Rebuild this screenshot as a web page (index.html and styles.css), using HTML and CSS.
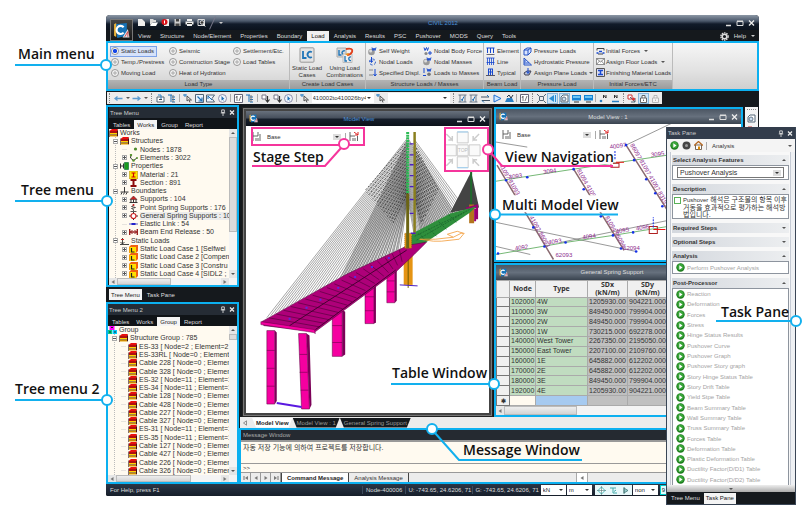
FILE: index.html
```html
<!DOCTYPE html>
<html lang="en">
<head>
<meta charset="utf-8">
<title>CIVIL 2012</title>
<link rel="stylesheet" href="styles.css">
</head>
<body>
<svg class="defs" aria-hidden="true">
  <symbol id="logo" viewBox="0 0 16 16"><path d="M2 2l11-1v12l-9 2z" fill="#1673b8"/><path d="M1 2l2-1v13l-2-1z" fill="#e9b23a"/><path d="M10 5A3.800 3.800 0 1 0 10 10" fill="none" stroke="#fff" stroke-width="2"/><path d="M9 14.500l5-8 1.500 8z" fill="#d9e4ec"/><path d="M11 14l3-5v5" fill="none" stroke="#d33" stroke-width=".8"/></symbol>
  <symbol id="q-new" viewBox="0 0 9 9"><path d="M1 1h4l3 3v4H1z" fill="#eee"/></symbol>
  <symbol id="q-open" viewBox="0 0 9 9"><path d="M1 1h3l1 1h2v2H4L1 7z" fill="#ddd"/><path d="M3 4.500h6L7 8H1z" fill="#fff"/></symbol>
  <symbol id="q-rec" viewBox="0 0 9 9"><path d="M3 1h5v7H3z" fill="#eee"/><circle cx="3.500" cy="4" r="3" fill="#d8121b"/><path d="M3.500 2.500v3" stroke="#fff"/></symbol>
  <symbol id="q-save" viewBox="0 0 9 9"><path d="M1.500 1h6v7h-6z" fill="#ccc"/><path d="M3 1h3v2.500H3zM2.500 5.500h4V8h-4z" fill="#444"/></symbol>
  <symbol id="q-print" viewBox="0 0 9 9"><path d="M2 1h5v2H2zM.500 3.500h8v3h-8zM2 6.500h5V8H2z" fill="#eee"/><path d="M2 5.500h5" stroke="#333"/></symbol>
  <symbol id="q-view" viewBox="0 0 9 9"><path d="M1 1.500h6.500v6H1z" fill="none" stroke="#ddd"/><circle cx="5" cy="4.500" r="1.800" fill="#333" stroke="#fff" stroke-width=".8"/><path d="M6.200 6l2 2.500" stroke="#fff"/></symbol>
  <symbol id="win" viewBox="0 0 30 8"><path d="M1 6.500h5" stroke="#ddd" stroke-width="1.500"/><path d="M12 2.500h6v4h-6zM12 2h6" stroke="#ddd" fill="none"/><path d="M24 1.500l5 5M29 1.500l-5 5" stroke="#eee" stroke-width="1.300"/></symbol>
  <symbol id="gear" viewBox="0 0 9 9"><circle cx="4.500" cy="4.500" r="3.600" fill="none" stroke="#ddd" stroke-width="1.400" stroke-dasharray="1.500 .8"/><circle cx="4.500" cy="4.500" r="2.300" fill="none" stroke="#ddd" stroke-width="1.500"/></symbol>
  <symbol id="lc" viewBox="0 0 16 16"><rect x="1" y=".800" width="14" height="14.400" rx="1" fill="#e4e4e4" stroke="#999"/><path d="M4 4v7h3.500M12.800 5.200a2.700 2.900 0 1 0 0 4.800" fill="none" stroke="#1e74b8" stroke-width="1.800"/></symbol>
  <symbol id="lcc" viewBox="0 0 18 16"><path d="M1 1h9v9H1z" fill="#ddd" stroke="#aaa"/><path d="M3 3v5h2.500M9 4a2 2 0 1 0 0 3.500" fill="none" stroke="#1e74b8" stroke-width="1.400"/><path d="M7 7h9v8.500H7z" fill="#eee" stroke="#bbb"/><path d="M9 9v5h2M15 10a1.800 1.800 0 1 0 0 3.500" fill="none" stroke="#1e74b8" stroke-width="1.300"/><path d="M10 2c5-1 7 0 6 3-1 2-3 3-5 3" fill="none" stroke="#e0401c" stroke-width="1.800"/><path d="M13 6l-4 1 3 2z" fill="#f09018"/></symbol>
  <symbol id="r-self" viewBox="0 0 9 9"><circle cx="3.500" cy="5" r="3.300" fill="#999"/><circle cx="2.600" cy="4" r="1.500" fill="#ddd"/><path d="M4 .5l1 3 1-2.500 1 2.500 1-3" fill="none" stroke="#1748d0"/></symbol>
  <symbol id="r-node" viewBox="0 0 9 9"><circle cx="4.500" cy="5" r="3" fill="none" stroke="#3b65c8" stroke-dasharray="3 1.500"/><path d="M3.500 0v5M2 3.500L3.500 5.500 5 3.500" fill="none" stroke="#1748d0"/></symbol>
  <symbol id="r-spec" viewBox="0 0 9 9"><path d="M1 2h4M1 7h4" stroke="#888"/><path d="M7 1v7M5.500 6L7 8l1.500-2" fill="none" stroke="#1748d0"/></symbol>
  <symbol id="r-mass" viewBox="0 0 9 9"><path d="M1 .5l1 3 1.500-3 1 3 1-3M5 6h4M7 4v4" fill="none" stroke="#1748d0"/><circle cx="3" cy="6.500" r="1.600" fill="#888"/></symbol>
  <symbol id="r-l2m" viewBox="0 0 9 9"><path d="M1 0v5M0 7.500h3M4 .5l1 3 1-2.500 1 2.500 1-3" fill="none" stroke="#1748d0"/><circle cx="6" cy="6.300" r="1.800" fill="#777"/></symbol>
  <symbol id="r-beam" viewBox="0 0 9 9"><path d="M.5 1h8M1.500 1v5M4.500 1v5M7.500 1v5" stroke="#1748d0" fill="none"/><path d="M.5 7.500h8" stroke="#667"/></symbol>
  <symbol id="r-line" viewBox="0 0 9 9"><path d="M.5 1h8M1.500 1v7M3.500 1v7M5.500 1v7M7.500 1v7M.5 5.500h8" stroke="#1748d0" fill="none" stroke-width=".8"/></symbol>
  <symbol id="r-typ" viewBox="0 0 9 9"><path d="M2 1h5M2.500 1v6M4.500 1v6M6.500 1v6M2 4h5" stroke="#1748d0" fill="none"/><path d="M0 7.500h9" stroke="#556"/></symbol>
  <symbol id="r-pres" viewBox="0 0 9 9"><path d="M1 3l3-2h4v4L5 8H1zM1 3h4v5M5 3l3-2" fill="#dce6ff" stroke="#2452c4"/></symbol>
  <symbol id="r-hyd" viewBox="0 0 9 9"><path d="M1 1v7h7.500zM1 4h2M1 6h5" fill="#dce6ff" stroke="#2452c4"/></symbol>
  <symbol id="r-plane" viewBox="0 0 9 9"><path d="M1 5l3-2h4L6 7H2z" fill="#b8c4dc" stroke="#445"/><path d="M5 0v5M3.500 3.500L5 5.500l1.500-2" fill="none" stroke="#1748d0"/></symbol>
  <symbol id="r-init" viewBox="0 0 9 9"><path d="M1 1.500h7M2 7h5M1 1.500v2M8 1.500v2" stroke="#444" fill="none"/><path d="M.5 6h2M6.500 6h2M3 4.500h3" stroke="#1748d0" stroke-width="1.400"/></symbol>
  <symbol id="r-floor" viewBox="0 0 9 9"><path d="M.5 1.500h8v6h-8zM.5 1.500l4 3.500 4-3.500M.5 7.500l3-3.500M8.500 7.500l-3-3.500" fill="#fff" stroke="#666" stroke-width=".7"/></symbol>
  <symbol id="r-fin" viewBox="0 0 9 9"><path d="M.5.5h8v8h-8z" fill="#dde" stroke="#555"/><path d="M2 2.500h5M4.500 2.500v4M2 6.500h5" stroke="#1748d0" stroke-width="1.500"/></symbol>
  <symbol id="t-back" viewBox="0 0 9 9"><path d="M8.500 4.500H1M3.500 2.500L1 4.500l2.500 2" fill="none" stroke="#5b9bd0" stroke-width="1.300"/></symbol>
  <symbol id="t-fwd" viewBox="0 0 9 9"><path d="M.5 4.500H8M5.500 2.500L8 4.500 5.500 6.500" fill="none" stroke="#5b9bd0" stroke-width="1.300"/></symbol>
  <symbol id="t-box" viewBox="0 0 9 9"><path d="M1 3h7v5H1z" fill="#fff" stroke="#567"/><path d="M2 1h3v4" stroke="#2a7fc4" fill="none"/><path d="M3 5.500h3" stroke="#345"/></symbol>
  <symbol id="t-tree" viewBox="0 0 9 9"><path d="M1 1h4M5 3h3M5 5.500h3M5 8h3M4 1v7" stroke="#1f6fb4" fill="none"/><path d="M6 1v7" stroke="#777"/></symbol>
  <symbol id="t-pick" viewBox="0 0 9 9"><path d="M0 1h4M2 0v3" stroke="#2a7fc4"/><path d="M4 2l4.500 4H6l1 2.500" fill="none" stroke="#555"/><path d="M4 2v5l2-1.500" fill="none" stroke="#555"/></symbol>
  <symbol id="t-win" viewBox="0 0 9 9"><path d="M.5.5h8v8h-8z" fill="#e8f3ff" stroke="#567"/><path d="M2.500 2.500L7 7V3.500M7 7H3.500" fill="none" stroke="#1f6fb4" stroke-width="1.200"/></symbol>
  <symbol id="t-poly" viewBox="0 0 9 9"><path d="M.5 1h8L6 4.500 8.500 8h-8z" fill="#e8f3ff" stroke="#567"/><path d="M2 2l4 4M2 2v3" stroke="#1f6fb4"/></symbol>
  <symbol id="t-circ" viewBox="0 0 9 9"><circle cx="4.500" cy="4.500" r="4" fill="#eef4fb" stroke="#779" stroke-width=".8"/><path d="M3.500 2l3 3-1.500.2.800 2-1.300-1.500-1 .8z" fill="#1f6fb4"/></symbol>
  <symbol id="t-half" viewBox="0 0 9 9"><path d="M.5.5h8v8h-8z" fill="#fff" stroke="#667"/><path d="M3 2v5M5 7l2-5M2 4l1-2" fill="none" stroke="#555" stroke-width=".8"/></symbol>
  <symbol id="t-down" viewBox="0 0 9 9"><path d="M1 1h4v4H1z" fill="#fff" stroke="#778"/><path d="M6.500 2v5M4.500 5.500l2 2.500 2-2.500" fill="none" stroke="#333" stroke-width="1.200"/></symbol>
  <symbol id="t-dim" viewBox="0 0 9 9"><path d="M.5 1h8M.5 8h8M2 1v7M7 1v7" stroke="#567" fill="none" stroke-width=".8"/><path d="M4 6.500l2-4M3.500 5l1 2" stroke="#1f6fb4"/></symbol>
  <symbol id="t-eq" viewBox="0 0 9 9"><path d="M0 3h8M1 6.500h8" stroke="#456" stroke-width="1.200"/><path d="M6 1l2 2M3 8.500l-2-2" stroke="#1f6fb4"/></symbol>
  <symbol id="t-tri" viewBox="0 0 9 9"><path d="M1 1l7 3.500L1 8z" fill="#cfe7ff" stroke="#1f6fd4"/></symbol>
  <symbol id="t-base" viewBox="0 0 9 9"><path d="M0 8l2-4h5l2 4z" fill="#2a7fc4"/><path d="M2 3l2-2 2 3 2-3" fill="none" stroke="#234"/></symbol>
  <symbol id="t-fit" viewBox="0 0 9 9"><path d="M2.500 2.500h4v4h-4zM0 0l2 2M9 0L7 2M0 9l2-2M9 9L7 7" fill="none" stroke="#567"/></symbol>
  <symbol id="t-cone" viewBox="0 0 9 9"><path d="M1 4.500L6 1v7z" fill="#2a8fd4"/><path d="M7.500 1v7" stroke="#2a8fd4"/></symbol>
  <symbol id="t-page" viewBox="0 0 9 9"><path d="M1 3l2-2h5v7H1z" fill="#fff" stroke="#567"/><circle cx="4" cy="5" r="2" fill="#cde" stroke="#678"/></symbol>
  <symbol id="t-mon" viewBox="0 0 9 9"><path d="M0 1h9v5.500H0z" fill="#1684d4"/><path d="M1 2h7v2H1z" fill="#6cc4f4"/><path d="M2 8h5" stroke="#333"/></symbol>
  <symbol id="t-n" viewBox="0 0 9 9"><path d="M4.500 4V1l2.500 3V1" fill="none" stroke="#333"/><circle cx="2" cy="7" r="1.300" fill="#2a7fc4"/></symbol>
  <symbol id="t-n2" viewBox="0 0 9 9"><path d="M3.500 4V1l2.500 3V1" fill="none" stroke="#333"/><path d="M1 7.500h7" stroke="#2a7fc4" stroke-width="1.600"/></symbol>
  <symbol id="t-red" viewBox="0 0 9 9"><path d="M1 1h4v4H1z" fill="#fff" stroke="#c33"/><path d="M3 3l5 5M8 4v4H4" fill="none" stroke="#567"/><circle cx="6.500" cy="5" r="1.500" fill="#d33"/></symbol>
  <symbol id="t-lock" viewBox="0 0 9 9"><path d="M1.500 4h6v4.500h-6zM3 4V1.500h3V4M4.500 5.500v1.500" fill="#fff" stroke="#666"/></symbol>
  <symbol id="s-dia" viewBox="0 0 9 9"><path d="M4.500 1L8 4.500 4.500 8 1 4.500z" fill="#fff" stroke="#4bb"/><path d="M4.500 0v9M0 4.500h9" stroke="#577" stroke-width=".6"/></symbol>
  <symbol id="s-hook" viewBox="0 0 9 9"><path d="M1 2h6M4 2v5h4M7 4L5 5.500" fill="none" stroke="#4aa"/></symbol>
  <symbol id="s-flag" viewBox="0 0 9 9"><path d="M3 1v7M3 2l4 2.500L3 7z" fill="#9cc" stroke="#477" stroke-width=".8"/></symbol>
  <symbol id="books" viewBox="0 0 9 8"><path d="M1 1.500L3 0h6L8 2H1z" fill="#e81010"/><path d="M1 2h7l1-1v1.500L8 4H1z" fill="#b01010"/><path d="M1 4h7v1.500H1z" fill="#ffd400"/><path d="M1 6h7v1.500H1z" fill="#e8a000"/><path d="M8 2l1-1v5.500L8 8z" fill="#411"/><path d="M.500 1.500v6.500M1 5.750h7" stroke="#311" stroke-width=".6"/></symbol>
  <symbol id="x-node" viewBox="0 0 9 8"><circle cx="6.500" cy="3" r="1.600" fill="#4f8a2c"/></symbol>
  <symbol id="x-elem" viewBox="0 0 9 8"><path d="M2 1l-.5 3 3 2.500L8 4" fill="none" stroke="#333"/><circle cx="2" cy="1" r="1.200" fill="#5a9630"/><circle cx="4.500" cy="6.500" r="1.300" fill="#5a9630"/><circle cx="8" cy="4" r="1" fill="#5a9630"/></symbol>
  <symbol id="x-prop" viewBox="0 0 9 8"><path d="M.5 1.500v5M3.500 1.500v5M.5 4h3" stroke="#333"/><path d="M4.500.5h4v7h-4z" fill="#1b9a1b" stroke="#063" stroke-width=".6"/></symbol>
  <symbol id="x-mat" viewBox="0 0 9 8"><path d="M.5 0h8v8h-8z" fill="#ffe600" stroke="#a80" stroke-width=".5"/><path d="M2.500 2h4M4.500 2v4M2.500 6h4" stroke="#d00000" stroke-width="1.200"/></symbol>
  <symbol id="x-sec" viewBox="0 0 9 8"><path d="M1.500 1h6M4.500 1v6M1.500 7h6" stroke="#8c0a0a" stroke-width="2"/></symbol>
  <symbol id="x-bound" viewBox="0 0 9 8"><path d="M4.500 0v5M.5 5h8M1 7.500l1-2M3.500 7.500l1-2M6 7.500l1-2" stroke="#222" stroke-width=".9"/></symbol>
  <symbol id="x-sup" viewBox="0 0 9 8"><path d="M1 4.500L4.500 1 8 4.500z" fill="#c22" stroke="#522" stroke-width=".6"/><path d="M2 4.500V7M7 4.500V7M4.500 4.500V7M.5 7.500h8" stroke="#333"/></symbol>
  <symbol id="x-spr" viewBox="0 0 9 8"><path d="M4.500 0v1.500l-2 1 4 1-4 1 2 1V7M1.500 7.500h6" fill="none" stroke="#333" stroke-width=".8"/><circle cx="4.500" cy="1" r="1" fill="#c22"/></symbol>
  <symbol id="x-gen" viewBox="0 0 9 8"><path d="M0 4h9M4.500 0v8" stroke="#333"/><circle cx="4.500" cy="4" r="2.500" fill="#fff" stroke="#c22" stroke-width="1.200"/></symbol>
  <symbol id="x-link" viewBox="0 0 9 8"><path d="M0 4h9" stroke="#55b"/><path d="M2.500 4h4" stroke="#22c" stroke-width="2"/></symbol>
  <symbol id="x-rel" viewBox="0 0 9 8"><path d="M.7 1v6M8.300 1v6M1 4h7" stroke="#922" stroke-width="1.400"/><path d="M3.500 2L1.500 4l2 2M5.500 2l2 2-2 2" fill="none" stroke="#922"/></symbol>
  <symbol id="x-sl" viewBox="0 0 9 8"><path d="M2.500 1v6M.5 5l2 2 2-2M0 7.500h9" fill="none" stroke="#333" stroke-width=".9"/><path d="M1 2.500h3" stroke="#c22"/></symbol>
  <symbol id="x-case" viewBox="0 0 9 8"><path d="M2 0h7v6L7 8H0V2z" fill="#f06010"/><path d="M.5 2h6.500v6H.5z" fill="#ffe000"/><path d="M2.500 3v4h3" fill="none" stroke="#222" stroke-width="1.200"/></symbol>
  <symbol id="x-grp" viewBox="0 0 9 8"><path d="M1.500 0h5v4h-5z" fill="#f0f"/><path d="M0 4h4v4H0z" fill="#0c8"/><path d="M4.500 4h4.500v4H4.500z" fill="#0cf"/><path d="M3 1.500h2M1 6h2M6 6h2" stroke="#222"/></symbol>
  <symbol id="go" viewBox="0 0 9 9"><circle cx="4.500" cy="4.500" r="4.200" fill="#1c7c1c"/><circle cx="4.500" cy="4" r="3.200" fill="#39a539"/><path d="M3.300 2.300l3.200 2.200-3.200 2.200z" fill="#fff"/></symbol>
  <symbol id="pin" viewBox="0 0 6 8"><path d="M1.500 1h3v3h-3zM.5 4.500h5M3 4.500V8" fill="none" stroke="#ddd"/></symbol>
  <symbol id="x" viewBox="0 0 6 6"><path d="M1 1l4 4M5 1L1 5" stroke="#eee" stroke-width="1.200"/></symbol>
  <symbol id="stage" viewBox="0 0 10 10"><path d="M1 0v9M1 4h5M6 0v4M4 6v3M6 6v3M8 2v7" fill="none" stroke="#555" stroke-width=".9"/></symbol>
  <symbol id="stage2" viewBox="0 0 10 10"><path d="M1 0v9M1 4h5M4 6v3M6 6v3M8.500 4v5" fill="none" stroke="#555" stroke-width=".9"/><path d="M5 0l4 3M9 0v3H6" fill="none" stroke="#d22"/></symbol>
  <symbol id="left" viewBox="0 0 6 6"><path d="M4.500 1v4L1.500 3z" fill="#777"/></symbol>
  <symbol id="right" viewBox="0 0 6 6"><path d="M1.500 1v4l3-2z" fill="#777"/></symbol>
  <symbol id="first" viewBox="0 0 6 6"><path d="M5 1v4L2 3zM.500 1h1v4h-1z" fill="#777"/></symbol>
  <symbol id="last" viewBox="0 0 6 6"><path d="M1 1v4l3-2zM4.500 1h1v4h-1z" fill="#777"/></symbol>
  <symbol id="open" viewBox="0 0 6 6"><path d="M4.500.8v4.400L1.500 3z" fill="none" stroke="#777" stroke-width=".8"/></symbol>
</svg>

<div class="page">
<div class="app">
  <header class="titlebar">
    <button class="logo" aria-label="Application menu"><svg><use href="#logo"/></svg></button>
    <div class="quick">
      <svg><use href="#q-new"/></svg><svg><use href="#q-open"/></svg><svg><use href="#q-rec"/></svg><svg><use href="#q-save"/></svg><svg><use href="#q-print"/></svg><svg><use href="#q-view"/></svg><i class="slash"></i><i class="caret light"></i>
    </div>
    <h1>CIVIL 2012</h1>
    <svg class="winbtns"><use href="#win"/></svg>
  </header>
  <nav class="tabs">
    <button>View</button><button>Structure</button><button>Node/Element</button><button>Properties</button><button>Boundary</button><button class="on">Load</button><button>Analysis</button><button>Results</button><button>PSC</button><button>Pushover</button><button>MODS</button><button>Query</button><button>Tools</button>
    <span class="help"><svg><use href="#gear"/></svg><button>Help</button><i class="caret light"></i></span>
  </nav>

  <section class="ribbon framed">
    <fieldset class="group g-type">
      <div class="cells three">
        <label class="picked"><input type="radio" name="lt" checked>Static Loads</label><label><input type="radio" name="lt">Seismic</label><label><input type="radio" name="lt">Settlement/Etc.</label>
        <label><input type="radio" name="lt">Temp./Prestress</label><label><input type="radio" name="lt">Construction Stage</label><label><input type="radio" name="lt">Load Tables</label>
        <label><input type="radio" name="lt">Moving Load</label><label><input type="radio" name="lt">Heat of Hydration</label>
      </div>
      <div class="cap">Load Type</div>
    </fieldset>
    <div class="group g-case">
      <div class="bigs"><button><svg><use href="#lc"/></svg>Static Load<br>Cases</button><button><svg><use href="#lcc"/></svg>Using Load<br>Combinations</button></div>
      <div class="cap">Create Load Cases</div>
    </div>
    <div class="group g-mass">
      <div class="cells two">
        <button><svg><use href="#r-self"/></svg>Self Weight</button><button><svg><use href="#r-mass"/></svg>Nodal Body Force</button>
        <button><svg><use href="#r-node"/></svg>Nodal Loads</button><button><svg><use href="#r-self"/></svg>Nodal Masses</button>
        <button><svg><use href="#r-spec"/></svg>Specified Displ.</button><button><svg><use href="#r-l2m"/></svg>Loads to Masses</button>
      </div>
      <div class="cap">Structure Loads / Masses</div>
    </div>
    <div class="group g-beam">
      <div class="cells"><button><svg><use href="#r-beam"/></svg>Element</button><button><svg><use href="#r-line"/></svg>Line</button><button><svg><use href="#r-typ"/></svg>Typical</button></div>
      <div class="cap">Beam Load</div>
    </div>
    <div class="group g-pres">
      <div class="cells"><button><svg><use href="#r-pres"/></svg>Pressure Loads</button><button><svg><use href="#r-hyd"/></svg>Hydrostatic Pressure</button><button><svg><use href="#r-plane"/></svg>Assign Plane Loads<i class="caret"></i></button></div>
      <div class="cap">Pressure Load</div>
    </div>
    <div class="group g-init">
      <div class="cells"><button><svg><use href="#r-init"/></svg>Initial Forces<i class="caret"></i></button><button><svg><use href="#r-floor"/></svg>Assign Floor Loads<i class="caret"></i></button><button><svg><use href="#r-fin"/></svg>Finishing Material Loads</button></div>
      <div class="cap">Initial Forces/ETC</div>
    </div>
  </section>

  <div class="toolrow">
    <div class="tools">
      <i class="grip"></i><svg><use href="#t-back"/></svg><i class="caret"></i><svg><use href="#t-fwd"/></svg><i class="caret"></i><i class="grip"></i>
      <svg><use href="#t-box"/></svg><svg><use href="#t-tree"/></svg><i class="sep"></i><svg><use href="#t-pick"/></svg><svg><use href="#t-win"/></svg><svg><use href="#t-poly"/></svg><svg><use href="#t-circ"/></svg><i class="sep"></i><svg><use href="#t-half"/></svg><svg><use href="#t-tree"/></svg><i class="sep"></i><svg><use href="#t-down"/></svg><svg><use href="#t-down"/></svg><svg><use href="#t-circ"/></svg><i class="sep"></i><svg><use href="#t-pick"/></svg>
      <span class="drop"><select aria-label="Selected nodes"><option>410002to410026by4</option></select></span>
      <svg><use href="#t-pick"/></svg>
      <span class="drop"><select aria-label="Selected elements"><option></option></select></span>
      <i class="grip"></i><svg><use href="#t-dim"/></svg><svg><use href="#t-dim"/></svg><svg><use href="#t-eq"/></svg><svg><use href="#t-tri"/></svg><svg><use href="#t-base"/></svg><i class="sep"></i><svg><use href="#t-half"/></svg><i class="grip"></i><svg><use href="#t-fit"/></svg><svg class="lit"><use href="#t-cone"/></svg><svg class="lit"><use href="#t-page"/></svg><svg><use href="#t-mon"/></svg><svg><use href="#t-mon"/></svg><i class="sep"></i><svg><use href="#t-n"/></svg><svg><use href="#t-n2"/></svg><i class="grip"></i><svg><use href="#t-red"/></svg><svg class="lit"><use href="#t-lock"/></svg><svg class="faint"><use href="#t-lock"/></svg>
    </div>
  </div>

  <main class="work">
    <aside class="side">
      <section class="panel framed">
        <div class="phead"><span>Tree Menu</span><svg><use href="#pin"/></svg><svg><use href="#x"/></svg></div>
        <div class="ptabs"><button>Tables</button><button class="on">Works</button><button>Group</button><button>Report</button></div>
        <div class="pbody">
          <ul class="tree">
            <li><svg><use href="#books"/></svg>Works</li>
            <li class="l1"><i class="ex minus"></i><svg><use href="#books"/></svg>Structures</li>
            <li class="l2"><i class="ex none"></i><svg><use href="#x-node"/></svg>Nodes : 1878</li>
            <li class="l2"><i class="ex"></i><svg><use href="#x-elem"/></svg>Elements : 3022</li>
            <li class="l1"><i class="ex minus"></i><svg><use href="#x-prop"/></svg>Properties</li>
            <li class="l2"><i class="ex"></i><svg><use href="#x-mat"/></svg>Material : 21</li>
            <li class="l2"><i class="ex"></i><svg><use href="#x-sec"/></svg>Section : 891</li>
            <li class="l1"><i class="ex minus"></i><svg><use href="#x-bound"/></svg>Boundaries</li>
            <li class="l2"><i class="ex"></i><svg><use href="#x-sup"/></svg>Supports : 104</li>
            <li class="l2"><i class="ex"></i><svg><use href="#x-spr"/></svg>Point Spring Supports : 176</li>
            <li class="l2"><i class="ex"></i><svg><use href="#x-gen"/></svg><span class="hl">General Spring Supports : 10</span></li>
            <li class="l2"><i class="ex none"></i><svg><use href="#x-link"/></svg>Elastic Link : 54</li>
            <li class="l2"><i class="ex"></i><svg><use href="#x-rel"/></svg>Beam End Release : 50</li>
            <li class="l1"><i class="ex minus"></i><svg><use href="#x-sl"/></svg>Static Loads</li>
            <li class="l2"><i class="ex"></i><svg><use href="#x-case"/></svg>Static Load Case 1 [Selfwei</li>
            <li class="l2"><i class="ex"></i><svg><use href="#x-case"/></svg>Static Load Case 2 [Compen</li>
            <li class="l2"><i class="ex"></i><svg><use href="#x-case"/></svg>Static Load Case 3 [Constru</li>
            <li class="l2"><i class="ex"></i><svg><use href="#x-case"/></svg>Static Load Case 4 [SIDL2 ;</li>
          </ul>
          <div class="vbar"><b><i class="caret up"></i></b><span class="long"></span><b class="end"><i class="caret"></i></b></div>
          <div class="hbar"><b><svg><use href="#left"/></svg></b><span></span><b class="end"><svg><use href="#right"/></svg></b></div>
        </div>
      </section>
      <div class="subtabs"><button class="on">Tree Menu</button><button>Task Pane</button></div>
      <section class="panel second framed">
        <div class="phead"><span>Tree Menu 2</span><svg><use href="#pin"/></svg><svg><use href="#x"/></svg></div>
        <div class="ptabs"><button>Tables</button><button>Works</button><button class="on">Group</button><button>Report</button></div>
        <div class="pbody">
          <ul class="tree">
            <li><svg><use href="#x-grp"/></svg>Group</li>
            <li class="l1"><i class="ex minus"></i><svg><use href="#books"/></svg>Structure Group : 785</li>
            <li class="l2"><i class="ex none"></i><svg><use href="#books"/></svg>ES-33 [ Node=2 ; Element=2</li>
            <li class="l2"><i class="ex none"></i><svg><use href="#books"/></svg>ES-33RL [ Node=0 ; Element</li>
            <li class="l2"><i class="ex none"></i><svg><use href="#books"/></svg>Cable 228 [ Node=0 ; Elemen</li>
            <li class="l2"><i class="ex none"></i><svg><use href="#books"/></svg>Cable 328 [ Node=0 ; Elemen</li>
            <li class="l2"><i class="ex none"></i><svg><use href="#books"/></svg>ES-32 [ Node=11 ; Element=1</li>
            <li class="l2"><i class="ex none"></i><svg><use href="#books"/></svg>ES-34 [ Node=11 ; Element=1</li>
            <li class="l2"><i class="ex none"></i><svg><use href="#books"/></svg>Cable 128 [ Node=0 ; Elemen</li>
            <li class="l2"><i class="ex none"></i><svg><use href="#books"/></svg>Cable 428 [ Node=0 ; Elemen</li>
            <li class="l2"><i class="ex none"></i><svg><use href="#books"/></svg>Cable 227 [ Node=0 ; Elemen</li>
            <li class="l2"><i class="ex none"></i><svg><use href="#books"/></svg>Cable 327 [ Node=0 ; Elemen</li>
            <li class="l2"><i class="ex none"></i><svg><use href="#books"/></svg>ES-31 [ Node=11 ; Element=1</li>
            <li class="l2"><i class="ex none"></i><svg><use href="#books"/></svg>ES-35 [ Node=11 ; Element=1</li>
            <li class="l2"><i class="ex none"></i><svg><use href="#books"/></svg>Cable 127 [ Node=0 ; Elemen</li>
            <li class="l2"><i class="ex none"></i><svg><use href="#books"/></svg>Cable 427 [ Node=0 ; Elemen</li>
            <li class="l2"><i class="ex none"></i><svg><use href="#books"/></svg>Cable 226 [ Node=0 ; Elemen</li>
            <li class="l2"><i class="ex none"></i><svg><use href="#books"/></svg>Cable 326 [ Node=0 ; Elemen</li>
          </ul>
          <div class="vbar"><b><i class="caret up"></i></b><span></span><b class="end"><i class="caret"></i></b></div>
          <div class="hbar"><b><svg><use href="#left"/></svg></b><span class="wide"></span><b class="end"><svg><use href="#right"/></svg></b></div>
        </div>
      </section>
    </aside>

    <div class="desk">
      <div class="windows">
        <section class="win main">
          <div class="whead"><svg class="wlogo"><use href="#logo"/></svg><h2 class="blue">Model View</h2><svg class="winbtns"><use href="#win"/></svg></div>
          <div class="canvas">
            <svg class="draw" id="bridge" viewBox="248 125 245 289" preserveAspectRatio="none">
              <g id="cables" fill="none" stroke="#4a4a4a" stroke-width=".5"></g>
              <g id="shade" fill="none" stroke="#222" stroke-width=".7" stroke-dasharray="2 1.500"></g>
              <path d="M475 171l-21 41 29-5z" fill="#444"/>
              <path d="M474 171h2v33h-2z" fill="#1f6a2c"/><path d="M473 204h5v19h-5z" fill="#b2741c"/>
              <path d="M470 208l11-3v14M479 208v13M481 206v12" stroke="#990070" stroke-width="2" fill="none"/>
              <path d="M416 233L454 213l26-7-6 6-46 31-20 4z" fill="#2f8f3c"/>
              <path d="M420 240L475 208M418 236l50-24M440 236l-8-8M450 229l-8-8M460 222l-8-8M430 241l-8-8" stroke="#17602a" stroke-width=".7" fill="none" stroke-dasharray="2 1"/>
              <path d="M423 239h16l18-2 8-4h3l-5 6-18 2h-8zM457 237l-6-3 10-3 6 2" fill="none" stroke="#f39a35" stroke-width=".8"/>
              <path d="M407 247h9v38h-9z" fill="#e59414"/><path d="M411.500 247v41" stroke="#6b5a00"/><path d="M403 285l18 1" stroke="#4b1fc0"/>
              <g fill="#f500a0" stroke="#50003a" stroke-width=".5">
                <path d="M390 268h8v35h-8z"/><path d="M368 284h9v40h-9z"/><path d="M335 310h10v47h-10z"/><path d="M269 331h8v74h-8z"/><path d="M301 334h8l3 76h-8z"/>
                <path d="M390 281h8M390 292h8M368 297h9M368 311h9M335 326h10M335 343h10M269 351h8M269 369h8M269 387h8M302 355h8M302 373h8M303 391h8"/>
              </g>
              <g fill="#7c0058"><path d="M398 268l2 2v31l-2 2zM377 284l2 2v37l-2 1zM345 310l3 2v43l-3 2zM277 331l2 2v69l-2 3zM309 334l3 2 2 70-2 4z"/></g>
              <path d="M279 404l25 4" stroke="#5a18e0" stroke-width="2"/>
              <path d="M264 322L350 274l62-29 18-3-12 12-18 17-82 61-52-6z" fill="#ae0079" stroke="#600043" stroke-width=".6"/>
              <path d="M263 322l54 8 1 4-2-1-6-1-47-7z" fill="#f500a0" stroke="#600043" stroke-width=".5"/>
              <g id="girders" stroke="#4c0036" stroke-width=".6"></g>
              <path d="M318 330l81-60M292 326l118-76" stroke="#3c002a" stroke-width=".9"/>
              <g fill="#5a2be0"><path d="M291 318h2v2h-2zM308 307h2v2h-2zM322 299h2v2h-2zM340 287h2v2h-2zM357 276h2v2h-2zM374 266h2v2h-2zM391 257h2v2h-2z"/></g>
              <path d="M408 233h7v15h-7z" fill="#e59414" stroke="#7b4a00" stroke-width=".5" stroke-dasharray="1 1"/>
              <path d="M411 131v62" stroke="#2dbb55" stroke-width="3" stroke-dasharray="2 .7"/>
              <path d="M411 193v55" stroke="#6b6414" stroke-width="3"/><path d="M418 131v103" stroke="#8a7f1e" stroke-width="2.500"/>
              <path d="M413 143h4M413 154h4M413 164h4M413 175h4M413 186h4M413 199h4M413 213h4M414 233h5" stroke="#4b1fc0" stroke-width="1.300"/>
              <g fill="#fafafa" stroke="#ccc"><path d="M461 131h11v11h-11zM449 144h11v11h-11zM461 144h11v11h-11zM473 144h11v11h-11zM461 156h11v11h-11z"/><path d="M450 133l6 6v-4M456 139h-4M483 133l-6 6v-4M477 139h4M450 165l6-6v4M456 159h-4M483 165l-6-6v4M477 159h4" fill="none" stroke-width="1.500"/><path d="M461 131h11M449 144v11M461 167h11" stroke="#9cd0f4"/></g>
              <text x="461.500" y="151.500" class="navtext">TOP</text>
            </svg>
            <div class="stagebar"><svg><use href="#stage"/></svg><span class="drop"><select aria-label="Stage"><option>Base</option></select></span><i class="sep"></i><svg><use href="#stage2"/></svg></div>
          </div>
        </section>
        <div class="pair">
          <section class="win framed">
            <div class="whead"><svg class="wlogo"><use href="#logo"/></svg><h2>Model View : 1</h2><svg class="winbtns"><use href="#win"/></svg></div>
            <div class="canvas">
              <svg class="draw" viewBox="496 125 243 135" preserveAspectRatio="none">
                <path d="M496 143l31 5M625 146l50-24M496 223l139 29M496 247l34 8M560 243l107-22" stroke="#555" stroke-width=".6" fill="none"/>
                <path d="M496 182l77-12 60-9 40-6M496 255l69-12 47-7 61-10" stroke="#3c9a3c" stroke-width=".7" fill="none"/>
                <path d="M497 166l56 94M573 170l50 81M625 146l48 76" stroke="#8a6a70" stroke-width="1.500" fill="none"/>
                <g fill="#8d2a8d" class="ids">
                  <text x="509" y="180" transform="rotate(-8 509 180)">3093</text><text x="543" y="175" transform="rotate(-8 543 175)">3094</text><text x="650" y="158" transform="rotate(-8 650 158)">3095</text><text x="609" y="150" transform="rotate(-8 609 150)">40097</text>
                  <text x="515" y="251" transform="rotate(-8 515 251)">4092</text><text x="548" y="245" transform="rotate(-8 548 245)">4093</text><text x="582" y="240" transform="rotate(-8 582 240)">4094</text><text x="615" y="234" transform="rotate(-8 615 234)">4095</text><text x="635" y="231" transform="rotate(-8 635 231)">4096</text><text x="622" y="251">62094</text><text x="555" y="258">62093</text>
                  <text x="499" y="166" transform="rotate(60 499 166)">41097 81093</text><text x="529" y="218" transform="rotate(60 529 218)">41092 86093</text>
                  <text x="576" y="171" transform="rotate(60 576 171)">81094 4109</text><text x="604" y="218" transform="rotate(60 604 218)">81094 86094</text>
                  <text x="629" y="146" transform="rotate(60 629 146)">86097 81097 41097 83197</text>
                </g>
                <g fill="#1530e8"><circle cx="527" cy="178" r="1.300"/><circle cx="506" cy="181" r="1.300"/><circle cx="573" cy="170" r="1.300"/><circle cx="583" cy="190" r="1.300"/><circle cx="625" cy="146" r="1.300"/><circle cx="633" cy="161" r="1.300"/><circle cx="645" cy="180" r="1.300"/><circle cx="654" cy="194" r="1.300"/><circle cx="661" cy="207" r="1.300"/><circle cx="533" cy="228" r="1.300"/><circle cx="544" cy="247" r="1.300"/><circle cx="565" cy="243" r="1.300"/><circle cx="600" cy="217" r="1.300"/><circle cx="612" cy="236" r="1.300"/><circle cx="632" cy="233" r="1.300"/><circle cx="620" cy="249" r="1.300"/><circle cx="635" cy="252" r="1.300"/><circle cx="498" cy="254" r="1.300"/></g>
                <path d="M648 227h8v7h-8zM610 164h8v4h-8z" fill="none" stroke="#b02020"/><path d="M652 230h12M615 163h8" stroke="#f01010"/><path d="M652 228v-10M614 160v-9" stroke="#1530e8" stroke-dasharray="2 1"/>
                <path d="M502 196h117v17H502zM504 149h108v16H504z" fill="#fff"/>
              </svg>
              <div class="stagebar"><svg><use href="#stage"/></svg><span class="drop"><select aria-label="Stage"><option>Base</option></select></span><i class="sep"></i><svg><use href="#stage2"/></svg></div>
            </div>
          </section>
          <section class="win framed">
            <div class="whead"><svg class="wlogo"><use href="#logo"/></svg><h2 class="far">General Spring Support</h2></div>
            <div class="sheet">
              <table>
                <colgroup><col class="c0"><col class="c1"><col class="c2"><col class="c3"><col class="c3"><col></colgroup>
                <thead><tr><th></th><th>Node</th><th>Type</th><th>SDx<br>(kN/m)</th><th>SDy<br>(kN/m)</th><th></th></tr></thead>
                <tbody>
                  <tr><th></th><td>102000</td><td>4W</td><td>1205930.00</td><td>904221.000</td><td></td></tr>
                  <tr><th></th><td>110000</td><td>3W</td><td>849450.000</td><td>799904.000</td><td></td></tr>
                  <tr><th></th><td>120000</td><td>2W</td><td>849450.000</td><td>799904.000</td><td></td></tr>
                  <tr><th></th><td>130000</td><td>1W</td><td>730215.000</td><td>692278.000</td><td></td></tr>
                  <tr><th></th><td>140000</td><td>West Tower</td><td>2267350.00</td><td>2195050.00</td><td></td></tr>
                  <tr><th></th><td>150000</td><td>East Tower</td><td>2207100.00</td><td>2109760.00</td><td></td></tr>
                  <tr><th></th><td>160000</td><td>1E</td><td>645882.000</td><td>612202.000</td><td></td></tr>
                  <tr><th></th><td>170000</td><td>2E</td><td>645882.000</td><td>612202.000</td><td></td></tr>
                  <tr><th></th><td>180000</td><td>3E</td><td>849450.000</td><td>799904.000</td><td></td></tr>
                  <tr><th></th><td>192000</td><td>4E</td><td>1205930.00</td><td>904221.000</td><td></td></tr>
                  <tr class="new"><th>✱</th><td></td><td></td><td></td><td></td><td></td></tr>
                </tbody>
              </table>
              <div class="hbar"><b><svg><use href="#left"/></svg></b><span class="third"></span></div>
            </div>
          </section>
        </div>
        <div class="strip"><i class="grip"></i><svg><use href="#t-page"/></svg><svg><use href="#t-red"/></svg></div>
      </div>
      <div class="doctabs"><svg><use href="#open"/></svg><button class="on">Model View</button><button>Model View : 1</button><button>General Spring Support</button></div>
      <section class="msg framed">
        <div class="mhead">Message Window</div>
        <div class="mtext">자동 저장 기능에 의하여 프로젝트를 저장합니다.</div>
        <div class="mline">&gt;&gt;</div>
        <div class="mtabs"><b><svg><use href="#first"/></svg></b><b><svg><use href="#left"/></svg></b><b><svg><use href="#right"/></svg></b><b><svg><use href="#last"/></svg></b><button class="on">Command Message</button><button>Analysis Message</button><span class="edge"><svg><use href="#left"/></svg></span></div>
      </section>
    </div>
  </main>

  <footer class="status">
    <span class="tip">For Help, press F1</span><span class="cell node">Node-400006</span><span class="cell">U: -743.65, 24.6206, 71</span><span class="cell">G: -743.65, 24.6206, 71</span>
    <span class="drop"><select aria-label="Force unit"><option>kN</option></select></span><span class="drop"><select aria-label="Length unit"><option>m</option></select></span>
    <span class="snaps"><svg><use href="#s-dia"/></svg><svg><use href="#s-hook"/></svg><svg><use href="#s-flag"/></svg></span>
    <span class="drop"><select aria-label="Filter"><option>non</option></select></span><span class="num">9</span>
  </footer>
</div>
</div>

<section class="task">
  <div class="phead"><span>Task Pane</span><svg><use href="#pin"/></svg><svg><use href="#x"/></svg></div>
  <div class="tbar"><svg><use href="#go"/></svg><svg><circle cx="4.500" cy="4.500" r="4" fill="#444"/><circle cx="4.500" cy="4.500" r="1.500" fill="#999"/></svg><svg viewBox="0 0 9 9"><path d="M1.500 4h6v4.500h-6z" fill="#fff" stroke="#765"/><path d="M0 4.500L4.500.5 9 4.500" fill="none" stroke="#b5651d" stroke-width="1.300"/><path d="M4 5.500h2v3H4z" fill="#d80"/></svg><i class="sep"></i><span>Analysis</span><i class="caret"></i></div>
  <div class="tbody">
    <h3>Select Analysis Features<i class="caret up"></i></h3>
    <div class="box pad"><span class="drop classic"><select aria-label="Analysis feature"><option>Pushover Analysis</option></select></span></div>
    <h3 class="gap">Description<i class="caret up"></i></h3>
    <div class="box desc"><i class="note"></i><p><span>Pushover</span> 해석은 구조물의 항목 이후<br>거동을 효과적으로 평가하는 해석방<br>법입니다.</p></div>
    <h3 class="gap">Required Steps<i class="caret"></i></h3>
    <h3 class="gap">Optional Steps<i class="caret"></i></h3>
    <h3 class="gap">Analysis<i class="caret up"></i></h3>
    <ul class="box links one"><li><svg><use href="#go"/></svg><a href="#">Perform Pushover Analysis</a></li></ul>
    <h3 class="gap">Post-Processor<i class="caret up"></i></h3>
    <ul class="box links all">
      <li><svg><use href="#go"/></svg><a href="#">Reaction</a></li><li><svg><use href="#go"/></svg><a href="#">Deformation</a></li><li><svg><use href="#go"/></svg><a href="#">Forces</a></li><li><svg><use href="#go"/></svg><a href="#">Stress</a></li><li><svg><use href="#go"/></svg><a href="#">Hinge Status Results</a></li><li><svg><use href="#go"/></svg><a href="#">Pushover Curve</a></li><li><svg><use href="#go"/></svg><a href="#">Pushover Graph</a></li><li><svg><use href="#go"/></svg><a href="#">Pushover Story graph</a></li><li><svg><use href="#go"/></svg><a href="#">Story Hinge Status Table</a></li><li><svg><use href="#go"/></svg><a href="#">Story Drift Table</a></li><li><svg><use href="#go"/></svg><a href="#">Yield Stpe Table</a></li><li><svg><use href="#go"/></svg><a href="#">Beam Summary Table</a></li><li><svg><use href="#go"/></svg><a href="#">Wall Summary Table</a></li><li><svg><use href="#go"/></svg><a href="#">Truss Summary Table</a></li><li><svg><use href="#go"/></svg><a href="#">Forces Table</a></li><li><svg><use href="#go"/></svg><a href="#">Deformation Table</a></li><li><svg><use href="#go"/></svg><a href="#">Plastic Deformation Table</a></li><li><svg><use href="#go"/></svg><a href="#">Ductility Factor(D/D1) Table</a></li><li><svg><use href="#go"/></svg><a href="#">Ductility Factor(D/D2) Table</a></li>
    </ul>
  </div>
  <div class="more"><i class="caret"></i></div>
  <div class="subtabs"><button>Tree Menu</button><button class="on">Task Pane</button></div>
</section>

<svg class="notes" viewBox="0 0 804 507">
  <g fill="none" stroke="#12b0ee" stroke-width="2"><path d="M15 65h87M15 201h87M15 400h87M499 214.500h119M391 384h98M435 433l24 27h123M716 321h75"/></g>
  <g fill="none" stroke="#f5359c" stroke-width="2"><path d="M252 166h73l16-18M491 153l11 13h111"/><rect x="252" y="128" width="112" height="17"/><rect x="445" y="128" width="43" height="43"/></g>
  <g fill="#fff" stroke="#12b0ee" stroke-width="2"><circle cx="106" cy="65" r="5"/><circle cx="107" cy="201" r="5"/><circle cx="107" cy="400" r="5"/><circle cx="495" cy="214.500" r="5"/><circle cx="494" cy="384" r="5"/><circle cx="432" cy="429" r="5"/><circle cx="796" cy="321" r="5"/></g>
  <g fill="#fff" stroke="#f5359c" stroke-width="2"><circle cx="344" cy="144" r="5"/><circle cx="488" cy="149.500" r="5"/></g>
  <g class="labels"><text x="18" y="59">Main menu</text><text x="21" y="195">Tree menu</text><text x="15" y="394">Tree menu 2</text><text x="253" y="162">Stage Step</text><text x="505" y="162">View Navigation</text><text x="502" y="210">Multi Model View</text><text x="392" y="378">Table Window</text><text x="463" y="455">Message Window</text><text x="721" y="317">Task Pane</text></g>
</svg>
<script src="script.js"></script>
</body>
</html>
```
FILE: styles.css
```css
* { box-sizing: border-box; }
body { margin: 0; background: #fff; font-family: "Liberation Sans", "Noto Sans CJK KR", sans-serif; font-size: 6px; line-height: 8px; color: #333; position: relative; }
h1, h2, h3, p, ul, fieldset { margin: 0; padding: 0; border: 0; font: inherit; list-style: none; min-width: 0; }
button, select, input { font: inherit; color: inherit; margin: 0; padding: 0; border: 0; background: none; white-space: nowrap; }
svg { display: block; flex: none; }
.defs { display: none; }
.page { height: 100vh; padding: 15px 45px 11px 106px; }
.app { height: 100%; display: flex; flex-direction: column; background: #15191d; border-radius: 4px 4px 2px 2px; overflow: hidden; }
.framed { border: 2px solid #0cb0f0; }
.caret { border: 2px solid transparent; border-top-color: #555; border-bottom: 0; width: 4px; height: 2px; flex: none; }
.caret.light { border-top-color: #ccc; }
.caret.up { transform: rotate(180deg); }
.sep { width: 1px; height: 8px; background: #aaa; flex: none; }
.grip { width: 2px; height: 10px; border-left: 1px dotted #888; flex: none; }
.drop { position: relative; display: block; background: #fff; flex: none; }
.drop select { appearance: none; width: 100%; height: 100%; padding: 0 8px 0 2px; border-radius: 0; display: block; }
.drop::after { content: ""; position: absolute; right: 3px; top: 40%; border: 2px solid transparent; border-top-color: #333; border-bottom: 0; }

.titlebar { height: 15px; display: flex; align-items: center; padding: 0 4px; background: linear-gradient(#8c97a5, #4b586b 40%, #111b2a 60%, #0b121d); position: relative; flex: none; }
.logo { width: 23px; height: 22px; align-self: flex-start; margin: 4px 4px 0 0; background: linear-gradient(#444, #161616); border: 1px solid #777; position: relative; z-index: 2; display: grid; place-items: center; flex: none; }
.logo svg { width: 17px; height: 17px; }
.quick { display: flex; align-items: center; gap: 3px; }
.quick svg { width: 9px; height: 9px; }
.slash { width: 1px; height: 14px; background: #778; transform: rotate(25deg); margin: 0 3px; }
h1 { flex: 1; text-align: center; color: #4a90d8; }
.titlebar h1 { padding-right: 62px; }
.winbtns { width: 30px; height: 8px; }
.tabs { display: flex; gap: 1px; height: 11px; padding: 1px 4px 0 28px; color: #ddd; background: #15191d; flex: none; }
.tabs > button { padding: 0 4px; }
.tabs > button.on { background: #f0f0f0; color: #111; }
.help { margin-left: auto; display: flex; align-items: center; gap: 5px; }
.help svg { width: 9px; height: 9px; }

.ribbon { display: flex; height: 50px; background: linear-gradient(#f6f6f6, #e2e2e2 60%, #cfcfcf); flex: none; }
.group { display: flex; flex-direction: column; border-right: 1px solid #bbb; min-width: 0; }
.g-type { width: 182px; } .g-case { width: 76px; } .g-mass { width: 118px; } .g-beam { width: 37px; } .g-pres { width: 73px; } .g-init { width: 79px; }
.cap { background: linear-gradient(#b4b4b4, #9b9b9b); height: 9px; line-height: 9px; text-align: center; color: #333; }
.cells { flex: 1; display: grid; grid-template-rows: repeat(3, 1fr); padding: 3px 2px 2px; white-space: nowrap; }
.cells.three { grid-template-columns: 58px 64px 1fr; }
.cells.two { grid-template-columns: 55px 1fr; }
.cells button, .cells label { display: flex; align-items: center; gap: 2px; }
.cells svg { width: 9px; height: 9px; }
.cells .caret { margin-left: 3px; }
.g-init button { gap: 1px; }
.g-pres .cells .caret { margin-left: 0; }
.cells label { justify-self: start; padding-right: 2px; border: 1px solid transparent; }
.cells label.picked { border-color: #7ea2e8; background: #d6e2fa; }
.cells input { appearance: none; width: 8px; height: 8px; border: 1px solid #999; border-radius: 50%; background: radial-gradient(#bbb 30%, #f4f4f4 50%); }
.cells input:checked { background: radial-gradient(#1748e8 45%, #fff 55%); }
.bigs { flex: 1; display: flex; justify-content: space-around; padding-top: 4px; }
.bigs button { display: flex; flex-direction: column; align-items: center; line-height: 7px; }
.bigs svg { width: 16px; height: 16px; margin-bottom: 2px; }
.bigs button:nth-child(2) svg { width: 18px; }

.toolrow { flex: none; height: 14px; padding: 1px 97px 1px 1px; }
.tools { height: 12px; background: #ececec; display: flex; align-items: center; justify-content: space-between; padding: 0 2px; }
.tools svg { width: 9px; height: 9px; }
.tools .lit { background: #cfe6f8; outline: 1px solid #8ab8dc; }
.tools .faint { opacity: .4; }
.tools .drop { width: 62px; height: 10px; }
.tools .drop select { padding-left: 1px; }

.work { flex: 1; min-height: 0; display: grid; grid-template-columns: 133px minmax(0, 1fr); gap: 1px; }
.side { display: grid; grid-template-rows: minmax(0, 1fr) 15px minmax(0, 1fr); min-height: 0; }
.panel { display: flex; flex-direction: column; min-height: 0; background: #101418; padding-left: 1px; }
.phead { display: flex; align-items: center; gap: 3px; height: 11px; padding: 0 2px 0 1px; background: #252c35; color: #ccc; flex: none; }
.phead span { flex: 1; }
.phead svg { width: 6px; height: 7px; }
.ptabs { display: flex; height: 11px; padding: 2px 0 0 1px; color: #ddd; flex: none; }
.ptabs button { padding: 0 3px; margin-right: 1px; }
.on { background: #f4f4f4; color: #222; }
.pbody { flex: 1; min-height: 0; display: grid; grid-template: minmax(0, 1fr) 7px / minmax(0, 1fr) 8px; background: #fffaf0; }
.tree { display: grid; grid-auto-rows: minmax(0, 1fr); overflow: hidden; font-size: 7px; white-space: nowrap; position: relative; }
.tree::before { content: ""; position: absolute; left: 6px; top: 8px; bottom: 0; border-left: 1px dotted #bbb; }
.tree li { display: flex; align-items: center; gap: 2px; position: relative; }
.tree svg { width: 9px; height: 8px; }
.tree .l1 { padding-left: 4px; } .tree .l2 { padding-left: 13px; }
.second { padding-left: 0; }
.ex { width: 5px; height: 5px; border: 1px solid #aaa; background: linear-gradient(#555, #555) center / 3px 1px no-repeat, linear-gradient(#555, #555) center / 1px 3px no-repeat, #fff; flex: none; }
.ex.minus { background: linear-gradient(#555, #555) center / 3px 1px no-repeat #fff; }
.ex.none { border: 0; background: linear-gradient(90deg, #ccc 50%, transparent 50%) center / 2px 1px repeat-x; height: 1px; }
.hl { background: #ececec; }
.vbar { background: #f4f4f4; display: flex; flex-direction: column; z-index: 1; }
.vbar b, .hbar b { flex: 0 0 8px; background: #e6e6e6; display: grid; place-items: center; }
.hbar svg, .mtabs svg { width: 6px; height: 6px; }
.vbar .end { margin-top: auto; }
.vbar span { height: 6px; background: #dcdcdc; border: 1px solid #bbb; }
.vbar .long { height: 64%; }
.hbar { background: #f4f4f4; display: flex; height: 9px; z-index: 1; flex: none; }
.pbody .hbar { grid-column: 1 / -1; height: 7px; padding-right: 8px; }
.hbar span { width: 45%; background: linear-gradient(#eee, #d4d4d4); border: 1px solid #bbb; }
.hbar .wide { width: 62%; }
.hbar .third { width: 30%; }
.hbar .end { margin-left: auto; }
.subtabs { display: flex; align-items: center; padding-left: 3px; color: #ddd; background: #15191d; }
.subtabs button { height: 11px; padding: 0 2px; margin-right: 3px; }

.desk { display: flex; flex-direction: column; min-width: 0; min-height: 0; padding-right: 1px; }
.windows { flex: 1; min-height: 0; display: grid; grid-template-columns: 253fr 248fr 15px; padding-top: 2px; }
.win { display: flex; flex-direction: column; min-width: 0; min-height: 0; background: #2a2f36; }
.win.main { border: 2px solid #777; outline: 1px solid #222; outline-offset: -1px; margin: 0 1px 0 2px; padding: 2px; background: #444; }
.whead { height: 15px; display: flex; align-items: center; padding: 0 3px; background: linear-gradient(#68717d, #47505d 45%, #161e2a 55%, #0c121b); color: #aaa; flex: none; }
.framed .whead { background: linear-gradient(#4c5663, #66707d 50%, #39434f); color: #ddd; }
.wlogo { width: 9px; height: 9px; }
.whead h2 { flex: 1; text-align: center; }
.whead .blue { color: #4a90d8; padding-left: 4px; }
.whead .far { padding-right: 22px; }
.canvas { flex: 1; min-height: 0; background: #fff; position: relative; overflow: hidden; }
.draw { width: 100%; height: 100%; }
.navtext { font-size: 5px; fill: #bbb; }
.ids { font-size: 6px; }
.stagebar { position: absolute; left: 6px; top: 6px; display: flex; align-items: center; gap: 3px; }
.stagebar svg { width: 10px; height: 10px; }
.stagebar .drop { width: 77px; height: 9px; }
.stagebar .drop::after { outline: 2px solid #ddd; background: #ddd; }
.pair { display: grid; grid-template-rows: minmax(0, 1fr) minmax(0, 1fr); gap: 1px; min-height: 0; min-width: 0; }
.strip { margin-left: 2px; background: #f4f4f4; display: flex; flex-direction: column; align-items: center; gap: 3px; padding-top: 2px; }
.strip .grip { width: 9px; height: 2px; border-left: 0; border-top: 1px dotted #888; }
.strip svg { width: 9px; height: 9px; }
.sheet { flex: 1; min-height: 0; display: flex; flex-direction: column; background: #f0f0f0; }
table { flex: 1; width: 100%; table-layout: fixed; border-collapse: collapse; font-size: 7px; line-height: 8px; height: 1px; }
.c0 { width: 13px; } .c1 { width: 26px; } .c2 { width: 52px; } .c3 { width: 40px; }
th, td { padding: 0 1px; border: 1px solid #aaa; white-space: nowrap; }
thead { font-family: "Noto Sans", sans-serif; }
th { background: #f0f0f0; }
tbody th { font-size: 6px; border-color: #777; }
td { background: #c0c0c0; text-align: right; height: 9px; }
td:nth-child(2) { background: #c0dcc0; } td:nth-child(3) { background: #c0dcc0; text-align: left; }
.new td:nth-child(2) { background: #fffaf0; } .new td:nth-child(3) { background: #a6caf0; }

.doctabs { display: flex; height: 11px; background: #ececec; align-items: center; padding-left: 2px; flex: none; }
.doctabs svg { width: 6px; height: 6px; margin-right: 4px; }
.doctabs button { height: 10px; padding: 0 4px; background: #15191d; color: #999; clip-path: polygon(0 0, 100% 0, calc(100% - 4px) 100%, 4px 100%); }
.doctabs .on { background: #fff; color: #222; font-weight: bold; }
.msg { flex: none; margin-left: -1px; background: #fffaf0; }
.mhead { background: #252a31; color: #aaa; height: 12px; line-height: 10px; padding-left: 2px; border-bottom: 2px solid #999; }
.mtext { height: 22px; font-size: 7px; line-height: 11px; padding-left: 2px; border-bottom: 1px solid #999; }
.mline { height: 9px; padding-left: 2px; border-bottom: 1px solid #999; }
.mtabs { height: 9px; background: #ececec; display: flex; }
.mtabs b { width: 10px; border-right: 1px solid #999; display: grid; place-items: center; }
.mtabs button { padding: 0 5px; border-right: 1px solid #444; background: none; }
.mtabs .on { background: #fff; font-weight: bold; border-left: 1px solid #444; }
.edge { margin-left: 167px; padding: 0 2px; border: solid #aaa; border-width: 0 1px; background: #fff; display: grid; place-items: center; }

.status { height: 12px; display: flex; align-items: center; background: linear-gradient(#2b3646, #161e2a); color: #ddd; padding: 0 4px; flex: none; white-space: nowrap; overflow: hidden; }
.tip { width: 252px; flex: none; }
.cell { padding: 0 1px 0 2px; border-left: 1px solid #3d4a5c; flex: none; }
.cell.node { padding: 0 3px; }
.status .drop { width: 25px; height: 10px; color: #222; margin-left: 1px; }
.snaps { display: flex; gap: 3px; background: #e8f8fa; padding: 0 2px; margin-left: 3px; height: 10px; align-items: center; }
.snaps svg { width: 9px; height: 9px; }
.num { background: #dff; color: #222; border: 1px solid #0cc; margin-left: 2px; width: 20px; padding-left: 1px; }

.task { position: absolute; top: 127px; right: 8px; bottom: 2px; width: 130px; background: #eef0f3; border: solid #3a4656; border-width: 0 1px 1px; display: flex; flex-direction: column; z-index: 3; }
.task .phead { background: #333d4c; height: 12px; }
.tbar { height: 13px; display: flex; align-items: center; gap: 3px; padding: 0 3px; background: #f4f4f4; flex: none; }
.tbar svg { width: 9px; height: 9px; }
.tbar span { flex: 1; padding-left: 2px; }
.tbody { flex: 1; min-height: 0; display: flex; flex-direction: column; margin: 0 4px 0 3px; padding: 3px 1px 0; background: #f8f8f8; border: solid #c4cad4; border-width: 0 1px; }
.tbody h3 { display: flex; align-items: center; justify-content: space-between; height: 10px; padding: 0 3px 0 1px; font-weight: bold; background: linear-gradient(90deg, #d4d8de, #eceef0); color: #333; flex: none; }
.tbody .gap { margin-top: 4px; }
.box { background: #fff; border: 1px solid #8d949e; flex: none; }
.pad { padding: 1px 4px; height: 15px; }
.classic { height: 11px; border: 1px solid #777; font-size: 7px; }
.classic::after { outline: 2px solid #ddd; background: #ddd; right: 4px; }
.desc { display: flex; gap: 2px; padding: 1px; height: 25px; font-size: 7px; line-height: 7px; white-space: nowrap; }
.desc span { font-size: 6px; }
.note { width: 7px; height: 7px; margin-top: 1px; border: 1px solid #58b058; flex: none; }
.links { display: flex; flex-direction: column; padding: 0 3px; color: #a4a4a4; }
.links li { flex: 1; display: flex; align-items: center; gap: 2px; }
.links svg { width: 9px; height: 9px; }
.links a { color: inherit; text-decoration: none; }
.one { height: 13px; }
.all { flex: 1; border-bottom: 0; min-height: 0; }
.more { height: 7px; background: linear-gradient(#eee, #aaa); display: grid; place-items: center; flex: none; }
.task .subtabs { height: 12px; flex: none; padding-left: 2px; }
.task .subtabs button { margin-right: 2px; }

.notes { position: absolute; left: 0; top: 0; width: 804px; height: 507px; pointer-events: none; z-index: 4; }
.labels { font-family: "Open Sans", "Noto Sans", sans-serif; font-weight: 600; font-size: 14px; fill: #111; }
```
FILE: script.js
```javascript
// Stay cables: straight lines between the pylon and evenly spaced deck points.
const NS = "http://www.w3.org/2000/svg";
function line(group, x1, y1, x2, y2) {
  const el = document.createElementNS(NS, "line");
  el.setAttribute("x1", x1);
  el.setAttribute("y1", y1);
  el.setAttribute("x2", x2);
  el.setAttribute("y2", y2);
  group.append(el);
}
function fan(group, count, tower, deck) {
  for (let i = 0; i < count; i++) {
    const t = i / count;
    line(group,
      tower[0], tower[1] + (tower[2] - tower[1]) * t,
      deck[0] + (deck[2] - deck[0]) * t, deck[1] + (deck[3] - deck[1]) * t);
  }
}
const cables = document.getElementById("cables");
fan(cables, 34, [411, 137, 200], [269, 318, 404, 248]);
fan(cables, 30, [411, 140, 200], [318, 330, 404, 262]);
fan(cables, 34, [411, 137, 200], [458, 212, 416, 233]);
fan(cables, 26, [418, 139, 200], [470, 210, 424, 240]);

// Denser strands near the pylon, where both cable planes overlap.
const shade = document.getElementById("shade");
fan(shade, 16, [411, 140, 196], [368, 190, 398, 225]);
fan(shade, 14, [418, 144, 200], [442, 190, 424, 226]);

// Cross girders of the deck.
const girders = document.getElementById("girders");
for (let i = 1; i < 20; i++) {
  const t = i / 20;
  line(girders, 264 + 146 * t, 322 - 76 * t, 318 + 92 * t, 331 - 73 * t);
}
```
